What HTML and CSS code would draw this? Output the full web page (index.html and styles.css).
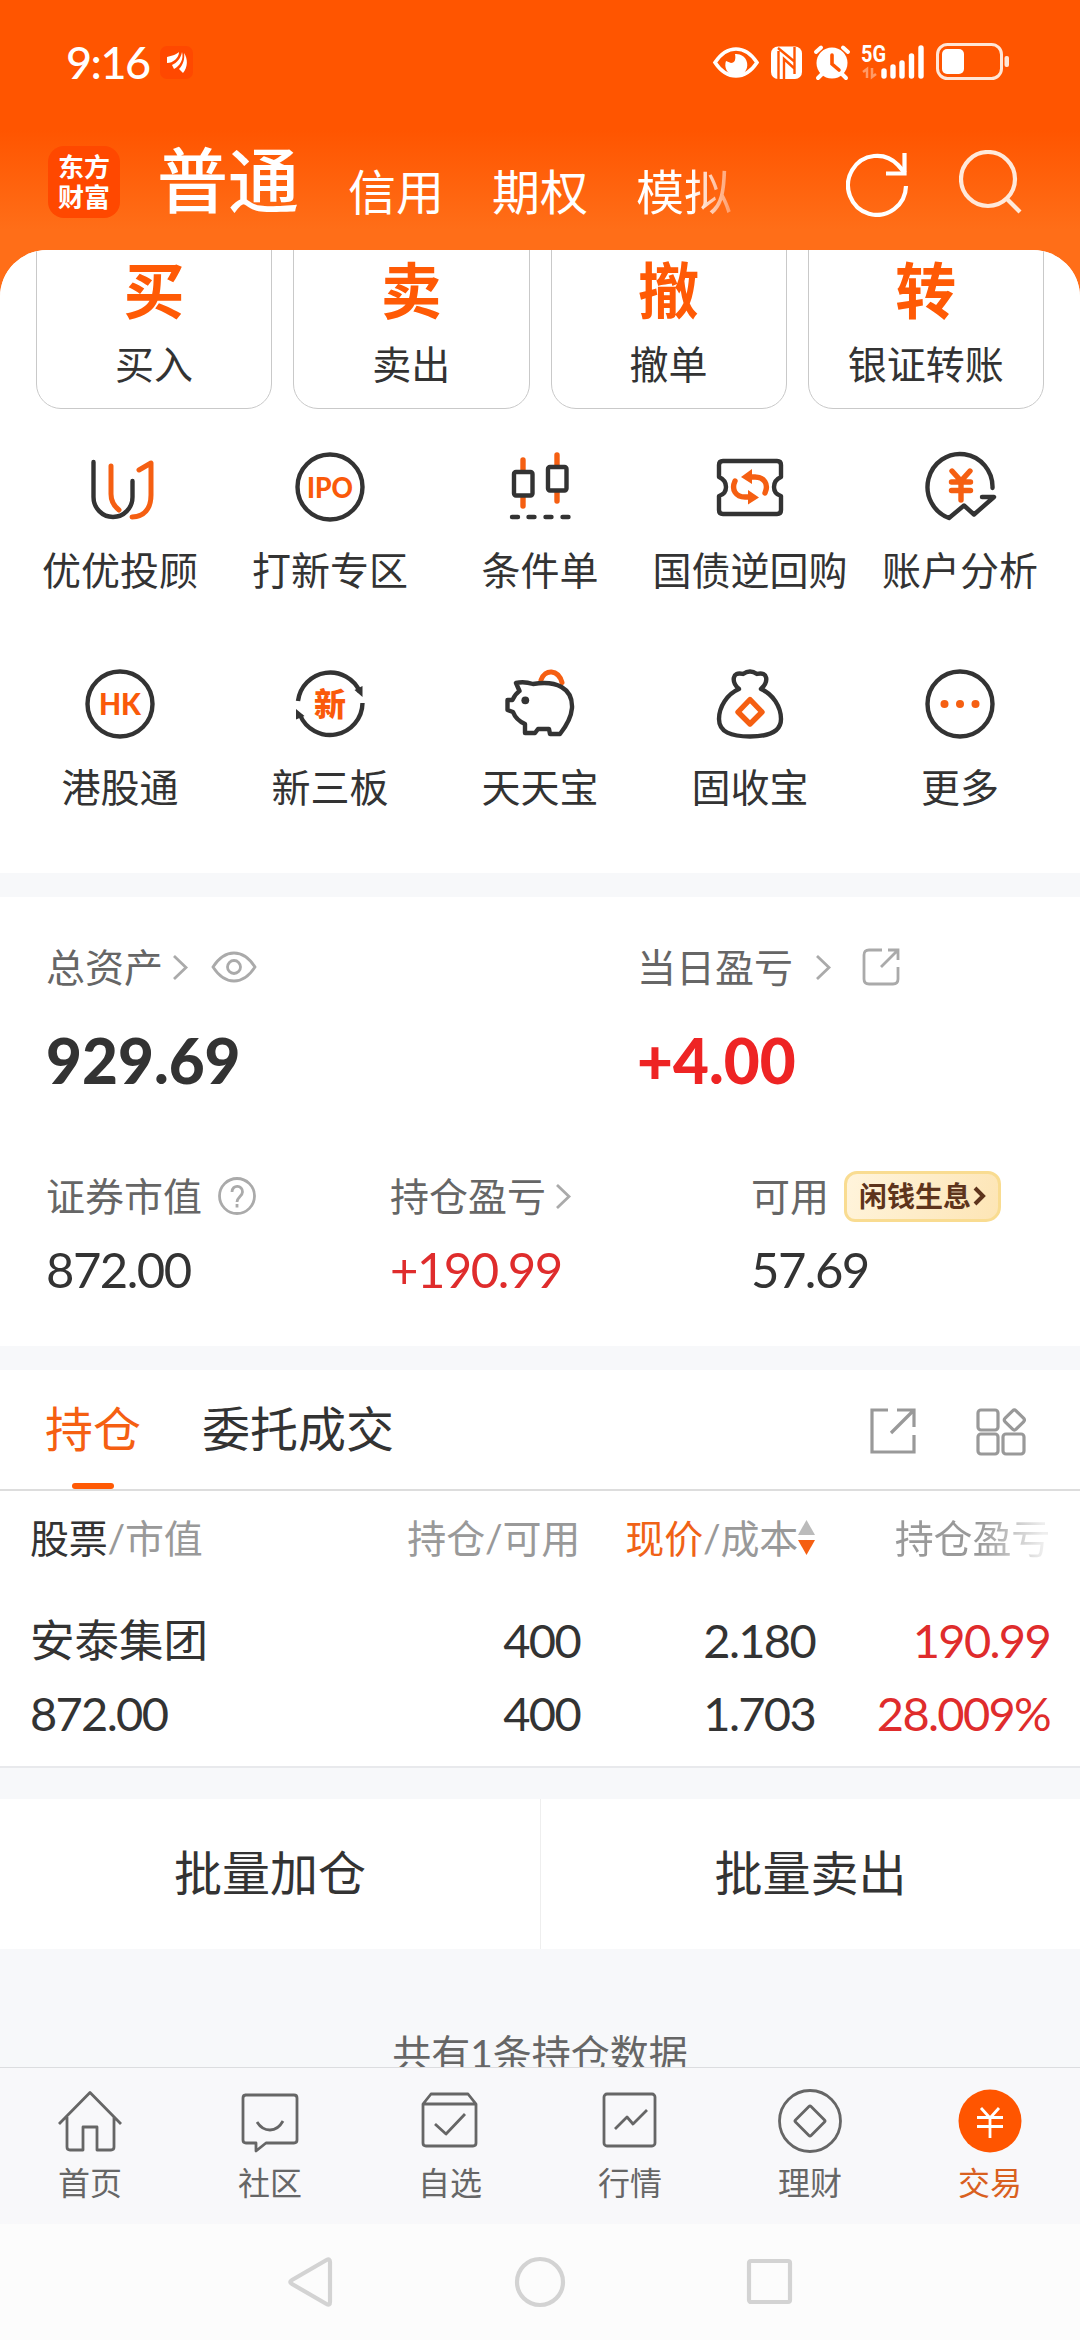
FILE: index.html
```html
<!DOCTYPE html>
<html lang="zh-CN">
<head>
<meta charset="utf-8">
<title>普通交易</title>
<link rel="stylesheet" href="styles.css">
</head>
<body>
<div class="screen">
  <header class="top">
    <div class="status">
      <span class="time">9:16</span>
      <svg class="app-mark" viewBox="0 0 33 33"><rect width="33" height="33" rx="7" fill="#ff4800"/><path fill="#fff" d="M7 11C12 10 17 8 19 6C19 12 13 17 7 17ZM12 19C17 17 21 12 22 6C24 13 20 20 14 23ZM19 23C23 19 25 13 24 7C28 13 28 21 23 27Z"/></svg>
      <svg class="status-icons" viewBox="710 40 302 42">
        <g fill="none" stroke="#fff" stroke-width="3.6"><path d="M715 61.500Q724 48 736 48T757 61.500Q748 75 736 75T715 61.500Z"/></g>
        <path fill="#fff" d="M726 60l5 2c4 0 5-4 4-9a11 11 0 1 1-9 7z"/>
        <rect x="771" y="45.500" width="31" height="32.500" rx="7" fill="#fff"/>
        <path fill="none" stroke="#ff5500" stroke-width="2.400" d="M778.500 50V78M794.500 46V73M778 47l17 14M784 78V58l11 10"/>
        <circle cx="832" cy="62" r="15.500" fill="#fff"/>
        <path stroke="#fff" stroke-width="4" stroke-linecap="round" d="M816 51l5-4.500M848 51l-5-4.500M822 73l-4 4M842 73l4 4"/>
        <path fill="none" stroke="#ff5500" stroke-width="3.600" stroke-linecap="round" d="M832 54v9l7 6"/>
        <text x="861" y="60.500" class="net" textLength="25" lengthAdjust="spacingAndGlyphs">5G</text>
        <path fill="none" stroke="#ff9a66" stroke-width="2.500" d="M863 71l4-3v9M872 67v9l4-3"/>
        <g stroke="#fff" stroke-width="5.400" stroke-linecap="round"><path d="M884 70v5M893 66v9M902 62v13M911.500 55v20M921 47v28"/></g>
        <rect x="937.500" y="43.500" width="64" height="34" rx="10" fill="none" stroke="#ffe6d6" stroke-width="3"/>
        <rect x="942" y="48" width="22" height="25" rx="5" fill="#fff"/>
        <rect x="1004.500" y="55" width="4.500" height="11" rx="2" fill="#ffe6d6"/>
      </svg>
    </div>
    <nav class="nav">
      <div class="logo">东方<br>财富</div>
      <div class="modes"><b>普通</b><span>信用</span><span>期权</span><span class="fade">模拟</span></div>
      <svg class="refresh" viewBox="0 0 64 64"><g fill="none" stroke="#fff" stroke-width="4.200"><path d="M60 33A29 29.500 0 1 1 52 12L59 20"/><path d="M58.500 0V20.500H40"/></g></svg>
      <svg class="search" viewBox="0 0 64 64"><g fill="none" stroke="#ffe9da" stroke-width="4.200"><circle cx="29" cy="29" r="27"/><path d="M48 49L61 62"/></g></svg>
    </nav>
  </header>

  <main>
    <section class="sheet">
      <div class="cards">
        <div class="card"><b>买</b><span>买入</span></div>
        <div class="card"><b>卖</b><span>卖出</span></div>
        <div class="card"><b>撤</b><span>撤单</span></div>
        <div class="card"><b>转</b><span>银证转账</span></div>
      </div>
      <div class="tools">
        <div class="tool"><svg viewBox="0 0 72 72"><path class="d" d="M9.500 11V46a19.500 20 0 0 0 39 0V30"/><path class="o" d="M27 15V43c0 8 3 12 8 16M55 19l12-7V44c0 14-7 21.500-19 22"/></svg><span>优优投顾</span></div>
        <div class="tool"><svg viewBox="0 0 72 72"><circle class="d" cx="36" cy="36" r="32.500"/><text class="ipo" x="36" y="46.500" textLength="46" lengthAdjust="spacingAndGlyphs">IPO</text></svg><span>打新专区</span></div>
        <div class="tool"><svg viewBox="0 0 72 72"><path class="o k" d="M19 9v10M19 46v9M53 4v10M53 41v9"/><rect class="d" x="10" y="21" width="18.500" height="23.500" rx="2"/><rect class="d" x="44" y="16" width="18.500" height="23.500" rx="2"/><path class="d" d="M8 66h6M24.500 66h6M41.500 66h6M58.500 66h6"/></svg><span>条件单</span></div>
        <div class="tool"><svg viewBox="0 0 72 72"><path class="d" d="M9 10H63q4 0 4 4V26Q60 29 60 36T67 45V59q0 4-4 4H9q-4 0-4-4V45Q12 43 12 36T5 26V14q0-4 4-4Z"/><path class="o k" d="M21 30c-4 9 1 16 10 16h6M51 42c4-9-1-16-10-16h-6"/><path fill="#f55f12" d="M27 26l11-8v15zM45 46.500l-11-7.500v14.500z"/></svg><span>国债逆回购</span></div>
        <div class="tool"><svg viewBox="0 0 72 72"><path class="d" d="M68.500 37A32.500 33 0 1 0 25 67L40 54.500L50 63.500L70 46H58"/><path class="o k" d="M28 20l9 10 9-10M37 30v19M27.500 31h19M27.500 39.500h19"/></svg><span>账户分析</span></div>
        <div class="tool"><svg viewBox="0 0 72 72"><circle class="d" cx="36" cy="36" r="32.500"/><text class="hk" x="36" y="47" textLength="42" lengthAdjust="spacingAndGlyphs">HK</text></svg><span>港股通</span></div>
        <div class="tool"><svg viewBox="0 0 72 72"><path class="d butt" d="M4 33A32.500 32.500 0 0 1 66 24M68.500 35A32.500 32.500 0 0 1 6 47"/><path fill="#333" d="M60.500 22l8-4v11zM10.500 48L2 51.500V41z"/><text class="xin" x="36" y="48">新</text></svg><span>新三板</span></div>
        <div class="tool"><svg viewBox="0 0 72 72"><path class="o" d="M37 12C41 1 54 1 58 14.500"/><path class="d" d="M15.500 23L12 15q8-2 17 1C52 12 69 20 68 40q-1 12-12 26H46l-1-5H34l-3 4H21V56Q12 52 9 44l-5.500-2V32H8.500Q11 26 15.500 23Z"/><circle cx="21.300" cy="32.300" r="3.900" fill="#333"/></svg><span>天天宝</span></div>
        <div class="tool"><svg viewBox="0 0 72 72"><path class="d" d="M25 21C17 14 18 3 29 6Q36 1 43 6C54 3 55 14 47 21C59 26 67 39 67 51C67 64 55 68.500 36 68.500S5 64 5 51C5 39 13 26 25 21Z"/><path class="o k" d="M36 31.500L48 44 36 56 24 44Z"/></svg><span>固收宝</span></div>
        <div class="tool"><svg viewBox="0 0 72 72"><circle class="d" cx="36" cy="36" r="32.500"/><g fill="#f55f12"><circle cx="20.500" cy="36" r="4"/><circle cx="36" cy="36" r="4"/><circle cx="51.500" cy="36" r="4"/></g></svg><span>更多</span></div>
      </div>
    </section>

    <section class="assets">
      <div class="totals">
        <div>
          <p class="label">总资产<svg class="chev near" viewBox="0 0 17 27"><path d="M2 2L14 13.500 2 25"/></svg><svg class="eye" viewBox="0 0 46 32"><path d="M2 16Q11 2 23 2T44 16Q35 30 23 30T2 16Z"/><circle cx="23" cy="16" r="6.500"/></svg></p>
          <p class="total">929.69</p>
        </div>
        <div>
          <p class="label">当日盈亏<svg class="chev far" viewBox="0 0 17 27"><path d="M2 2L14 13.500 2 25"/></svg><svg class="share" viewBox="0 0 40 40"><path d="M21 3H8Q3 3 3 8V32Q3 37 8 37H32Q37 37 37 32V20M27 3H37V13M37 3L20 20"/></svg></p>
          <p class="total up">+4.00</p>
        </div>
      </div>
      <div class="parts">
        <div><p class="label">证券市值<svg class="help" viewBox="0 0 40 40"><circle cx="20" cy="20" r="17.500"/><path d="M15 16c0-8 11-7 10.500 0c0 4-5.500 5-5.500 10M20 28v3.500"/></svg></p><p class="part">872.00</p></div>
        <div><p class="label">持仓盈亏<svg class="chev near" viewBox="0 0 17 27"><path d="M2 2L14 13.500 2 25"/></svg></p><p class="part up">+190.99</p></div>
        <div><p class="label">可用<span class="badge">闲钱生息<svg viewBox="0 0 14 20"><path d="M2 2L10 10 2 18"/></svg></span></p><p class="part">57.69</p></div>
      </div>
    </section>

    <section class="holdings">
      <div class="tabs">
        <span class="tab on">持仓</span><span class="tab">委托成交</span>
        <svg class="export" viewBox="0 0 48 48"><path d="M19 3H3V45H45V28M28 3H45V20M45 3L22 26"/></svg>
        <svg class="blocks" viewBox="0 0 50 50"><rect x="2" y="3" width="20" height="20" rx="3"/><rect x="2" y="27" width="20" height="20" rx="3"/><rect x="27" y="27" width="21" height="20" rx="3"/><rect x="30.500" y="5" width="15.500" height="15.500" rx="2.500" transform="rotate(45 38 13)"/></svg>
      </div>
      <div class="row head">
        <span><em>股票</em>/市值</span><span>持仓/可用</span>
        <span class="sort"><i>现价</i>/成本<svg viewBox="0 0 17 36"><path fill="#bbb" d="M8.500 0L17 15H0z"/><path fill="#f55f12" d="M0 20H17L8.500 35z"/></svg></span>
        <span class="fadeout">持仓盈亏</span>
      </div>
      <div class="row first"><span class="name">安泰集团</span><span>400</span><span>2.180</span><span class="up">190.99</span></div>
      <div class="row second"><span>872.00</span><span>400</span><span>1.703</span><span class="up">28.009%</span></div>
    </section>

    <section class="batch"><span>批量加仓</span><span>批量卖出</span></section>
    <p class="count">共有1条持仓数据</p>
  </main>

  <nav class="tabbar">
    <div><svg viewBox="0 0 68 68"><path d="M3 36L34 4.500 65 36M11 29V59q0 3 3 3H27V39H41V62H55q3 0 3-3V29"/></svg><span>首页</span></div>
    <div><svg viewBox="0 0 68 68"><path d="M9 7H58q3 0 3 3V52q0 3-3 3H30L20 63V55H10q-3 0-3-3V10q0-3 3-3M21 34Q26 42 34 42T47 33"/></svg><span>社区</span></div>
    <div><svg viewBox="0 0 68 68"><path d="M7 16V55q0 3 3 3H57q3 0 3-3V16L52 6H15ZM7 16H60M19 36L30 46 49 26"/></svg><span>自选</span></div>
    <div><svg viewBox="0 0 68 68"><rect x="8" y="6" width="51" height="52" rx="3"/><path d="M19 41L31 29 37 36 51 22"/></svg><span>行情</span></div>
    <div><svg viewBox="0 0 68 68"><circle cx="34" cy="33" r="30.500"/><rect x="23" y="22" width="22" height="22" rx="1.500" transform="rotate(45 34 33)"/></svg><span>理财</span></div>
    <div class="active"><svg viewBox="0 0 68 68"><circle cx="34" cy="33" r="31.500" fill="#ff5500" stroke="none"/><path stroke="#fff" d="M25 20L34 30 43 20M34 30V50M21 29.500H47M21 38.500H47"/></svg><span>交易</span></div>
  </nav>
  <div class="system">
    <svg viewBox="0 0 52 52"><path d="M41.500 4Q45 2 45 6V46Q45 50 41.500 48L7 28Q3.500 26 7 24Z"/></svg>
    <svg viewBox="0 0 52 52"><circle cx="26" cy="26" r="23"/></svg>
    <svg viewBox="0 0 52 52"><rect x="6" y="5" width="41" height="41" rx="2"/></svg>
  </div>
</div>
</body>
</html>
```
FILE: styles.css
```css
* { box-sizing: border-box; margin: 0; padding: 0; }
body { background: #fff; font-family: Lato, "Noto Sans CJK SC", sans-serif; color: #333; }
svg { display: block; flex: none; }
em, i { font-style: normal; }
.screen { width: 1080px; height: 2340px; display: flex; flex-direction: column; overflow: hidden; background: linear-gradient(#ff5500 0, #ff5500 130px, #ff6e18 230px, #ff6e18 320px, #fff 320px); }

.top { height: 250px; flex: none; color: #fff; }
.status { height: 124px; display: flex; align-items: center; padding: 0 68px 0 66px; }
.time { font-size: 45px; font-weight: 500; width: 94px; white-space: nowrap; letter-spacing: -1.5px; }
.app-mark { width: 33px; height: 33px; }
.status-icons { width: 302px; height: 42px; margin-left: auto; }
.net { font: 700 23px Roboto, sans-serif; fill: #fff; }
.nav { display: flex; height: 126px; padding: 22px 0 0 48px; }
.logo { width: 72px; height: 72px; border-radius: 16px; background: #ff4800; padding-top: 5px; text-align: center; font: 700 26px/30px "Noto Sans CJK SC", sans-serif; }
.modes { margin-left: 37px; display: flex; gap: 48px; width: 640px; height: 72px; align-items: center; font-size: 48px; line-height: 72px; }
.modes b { font-size: 71px; font-weight: 500; margin-right: 1px; margin-top: -5px; }
.modes span { padding-top: 20px; }
.fade { background: linear-gradient(90deg, #fff 58%, #ff9a66 100%); -webkit-background-clip: text; background-clip: text; color: transparent; }
.refresh { width: 64px; height: 64px; margin: 7px 0 0 49px; }
.search { width: 64px; height: 64px; margin: 4px 0 0 49px; }

main { height: 1817px; flex: none; overflow: hidden; background: #f7f8fa; border-radius: 47px 47px 0 0; }
.sheet { height: 623px; background: #fff; }
.cards { display: grid; grid-template-columns: repeat(4, 1fr); gap: 21px; padding: 0 36px; height: 159px; }
.card { border: 1.500px solid #c9c9c9; border-radius: 25px; margin-top: -26px; height: 185px; display: flex; flex-direction: column; align-items: center; }
.card b { font-size: 61px; line-height: 70px; font-weight: 700; color: #ff5a05; margin-top: 31px; }
.card span { font-size: 39px; line-height: 50px; margin-top: 13px; }
.tools { display: grid; grid-template-columns: repeat(5, 210px); grid-auto-rows: 217px; padding: 42px 15px 0; }
.tool { display: flex; flex-direction: column; align-items: center; }
.tool svg { width: 72px; height: 72px; overflow: visible; }
.tool span { font-size: 39px; line-height: 50px; margin-top: 22px; white-space: nowrap; }
.d, .o { fill: none; stroke: #333; stroke-width: 4.400; stroke-linecap: round; stroke-linejoin: round; }
.o { stroke: #f55f12; stroke-width: 5; }
.k { stroke-width: 5.400; }
.butt { stroke-linecap: butt; }
.ipo, .hk, .xin { font: 900 29px Lato, "Noto Sans CJK SC", sans-serif; text-anchor: middle; fill: #fa5a0a; }
.hk { font-size: 30px; }
.xin { font-size: 32px; }

.assets { margin-top: 24px; height: 449px; background: #fff; padding-top: 44px; }
.totals { display: grid; grid-template-columns: 591px 1fr; padding-left: 46px; height: 229px; }
.parts { display: grid; grid-template-columns: 344px 361px 1fr; padding-left: 46px; }
.label { display: flex; align-items: center; height: 52px; font-size: 39px; line-height: 52px; color: #666; }
.label svg { fill: none; stroke: #aaa; stroke-width: 2.800; }
.chev { width: 17px; height: 27px; }
.near { margin-left: 9px; }
.far { margin-left: 22px; }
.eye { width: 46px; height: 32px; margin-left: 22px; }
.share { width: 40px; height: 40px; margin-left: 29px; }
.help { width: 40px; height: 40px; margin-left: 15px; }
.total { font-size: 62px; line-height: 80px; font-weight: 900; margin-top: 27px; }
.part { font-size: 49px; line-height: 60px; margin-top: 17px; letter-spacing: -1.500px; }
.up { color: #df2c2c; }
.total.up { color: #ee2424; }
.badge { display: flex; align-items: center; width: 157px; height: 51px; margin-left: 15px; padding-left: 12px; border: 3px solid #f9dc91; border-radius: 13px 13px 15px 11px; background: linear-gradient(110deg, #fff4dc, #fde5b5); color: #5e341c; font-size: 28px; font-weight: 700; }
.badge svg { width: 14px; height: 20px; stroke: #5e341c; stroke-width: 4; margin-left: 2px; }

.holdings { margin-top: 24px; height: 398px; background: #fff; border-bottom: 2px solid #e8e9ec; }
.tabs { height: 121px; border-bottom: 2px solid #ddd; padding-left: 45px; display: flex; font-size: 48px; line-height: 118px; }
.tab { margin-right: 61px; }
.tab.on { color: #f55f12; display: flex; flex-direction: column; align-items: center; }
.tab.on::after { content: ""; width: 42px; height: 6px; border-radius: 3px; background: #ff5a05; margin-top: -5px; }
.tabs svg { width: 48px; height: 48px; fill: none; stroke: #999; stroke-width: 3.200; margin-top: 37px; }
.export { margin-left: 414px; }
.tabs .blocks { width: 50px; height: 50px; margin-left: 59px; }
.row { display: grid; grid-template-columns: 249px 301px 235px 1fr; padding: 0 30px; text-align: right; font-size: 47px; letter-spacing: -1.700px; }
.row > :first-child { text-align: left; }
.head { font-size: 39px; letter-spacing: -0.200px; line-height: 52px; color: #999; margin-top: 21px; white-space: nowrap; }
.head em { color: #333; }
.head i { color: #f06216; }
.sort { display: flex; justify-content: flex-end; align-items: center; }
.sort svg { width: 17px; height: 36px; }
.fadeout { background: linear-gradient(90deg, #999 70%, #eee 97%); -webkit-background-clip: text; background-clip: text; color: transparent; }
.first { margin-top: 40px; line-height: 72px; }
.second { line-height: 74px; }
.row .name { font-size: 44.500px; letter-spacing: 0; }

.batch { margin-top: 31px; height: 150px; background: #fff; display: grid; grid-template-columns: 1fr 1fr; text-align: center; font-size: 48px; line-height: 148px; }
.batch span + span { border-left: 1px solid #eee; }
.count { text-align: center; font-size: 39px; line-height: 50px; margin-top: 79px; color: #666; }

.tabbar { height: 157px; flex: none; background: #f8f8fa; border-top: 1px solid #dcdde0; display: grid; grid-template-columns: repeat(6, 1fr); }
.tabbar div { display: flex; flex-direction: column; align-items: center; color: #666; font-size: 32px; line-height: 44px; padding-top: 20px; }
.tabbar svg { width: 68px; height: 68px; fill: none; stroke: #666; stroke-width: 2.800; stroke-linejoin: round; }
.tabbar span { margin-top: 5px; }
.tabbar .active { color: #d9601f; }
.system { flex: 1; background: #fcfcfc; display: flex; justify-content: center; gap: 177px; padding-top: 32px; }
.system svg { width: 52px; height: 52px; fill: none; stroke: #d3d3d3; stroke-width: 4.200; }
```
